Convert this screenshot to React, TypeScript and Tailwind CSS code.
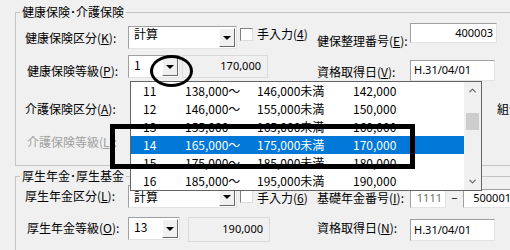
import type { ReactNode } from "react"
import { ChevronDown, ChevronUp } from "lucide-react"

const Txt = ({ className = "", children }: { className?: string; children: ReactNode }) => (
  <span className={`shrink-0 whitespace-nowrap leading-[16px] ${className}`}>{children}</span>
)

const Arrow = () => (
  <div className="w-[16px] h-full shrink-0 flex items-center justify-center bg-[#f0f0f0] border border-t-white border-l-white border-r-[#696969] border-b-[#696969]">
    <div className="w-0 h-0 border-x-[4px] border-x-transparent border-t-[4px] border-t-black" />
  </div>
)

const Combo = ({ className = "", text, textClass = "leading-[16px]" }: { className?: string; text: string; textClass?: string }) => (
  <div className={`shrink-0 h-[23px] flex bg-white border border-t-[#a0a0a0] border-l-[#a0a0a0] border-r-[#e3e3e3] border-b-[#e3e3e3] p-[1px] ${className}`}>
    <span className={`flex-1 pl-[4px] ${textClass}`}>{text}</span>
    <Arrow />
  </div>
)

const Check = ({ className = "" }: { className?: string }) => (
  <div className={`shrink-0 w-[13px] h-[13px] bg-white border border-t-[#808080] border-l-[#808080] border-r-[#dcdcdc] border-b-[#dcdcdc] ${className}`} />
)

const Box = ({ className = "", children }: { className?: string; children?: ReactNode }) => (
  <div className={`shrink-0 flex items-center px-[3px] bg-white border border-t-[#a0a0a0] border-l-[#a0a0a0] border-r-[#e3e3e3] border-b-[#e3e3e3] font-['Noto_Sans',sans-serif] text-[11px] ${className}`}>
    {children}
  </div>
)

const ReadOnly = ({ className = "", children }: { className?: string; children: ReactNode }) => (
  <div className={`shrink-0 flex items-center justify-end pr-[6px] border border-[#dadada] font-['Noto_Sans',sans-serif] text-[11px] ${className}`}>
    {children}
  </div>
)

const rows = [
  ["11", "138,000～", "146,000未満", "142,000"],
  ["12", "146,000～", "155,000未満", "150,000"],
  ["13", "155,000～", "165,000未満", "160,000"],
  ["14", "165,000～", "175,000未満", "170,000"],
  ["15", "175,000～", "185,000未満", "180,000"],
  ["16", "185,000～", "195,000未満", "190,000"],
]

export default function App() {
  return (
    <div className="relative w-[510px] h-[250px] overflow-hidden bg-[#f0f0f0] text-[12px] text-black font-['Noto_Sans_CJK_JP',sans-serif]">
      <div className="pl-[15px] pt-[4px] w-[560px]">
        {/* 健康保険・介護保険 */}
        <fieldset className="h-[162px] border border-[#c4c4c4]">
          <legend className="ml-[4px] px-[2px] leading-[16px]">健康保険･介護保険</legend>

          <div className="flex items-start h-[32px]">
            <Txt className="ml-[9px] w-[103px] mt-[10px]">健康保険区分(<u>K</u>):</Txt>
            <Combo className="w-[109px] mt-[6px]" text="計算" textClass="leading-[12px]" />
            <Check className="ml-[3px] mt-[8px]" />
            <Txt className="ml-[4px] w-[60px] mt-[6px]">手入力(<u>4</u>)</Txt>
            <Txt className="w-[93px] mt-[13px]">健保整理番号(<u>E</u>):</Txt>
            <Box className="w-[87px] h-[20px] mt-[3px] justify-end">400003</Box>
          </div>

          <div className="flex items-start h-[34px]">
            <Txt className="ml-[11px] w-[101px] mt-[11px]">健康保険等級(<u>P</u>):</Txt>
            <Combo className="w-[52px] mt-[3px]" text="1" />
            <ReadOnly className="ml-[2px] w-[86px] h-[23px] mt-[3px]">170,000</ReadOnly>
            <Txt className="ml-[49px] w-[93px] mt-[12px]">資格取得日(<u>V</u>):</Txt>
            <Box className="w-[85px] h-[21px] mt-[8px]">H.31/04/01</Box>
          </div>

          <div className="flex items-start h-[38px]">
            <Txt className="ml-[9px] w-[103px] mt-[15px]">介護保険区分(<u>A</u>):</Txt>
            <Txt className="ml-[369px] mt-[15px]">組合</Txt>
          </div>

          <div className="flex items-start h-[30px]">
            <Txt className="ml-[11px] mt-[10px] text-[#a0a0a0]">介護保険等級(<u>L</u>):</Txt>
          </div>
        </fieldset>

        {/* 厚生年金・厚生基金 */}
        <fieldset className="mt-[2px] h-[90px] border border-[#c4c4c4]">
          <legend className="ml-[4px] px-[2px] leading-[16px]">厚生年金･厚生基金</legend>

          <div className="flex items-start h-[29px]">
            <Txt className="ml-[9px] w-[103px] mt-[4px]">厚生年金区分(<u>L</u>):</Txt>
            <Combo className="w-[109px] mt-[1px]" text="計算" textClass="leading-[19px]" />
            <Check className="ml-[3px] mt-[6px]" />
            <Txt className="ml-[4px] w-[60px] mt-[6px] leading-[12px]">手入力(<u>6</u>)</Txt>
            <Txt className="w-[93px] mt-[6px] leading-[12px]">基礎年金番号(<u>I</u>):</Txt>
            <Box className="w-[36px] h-[19px] mt-[5px] justify-end text-[#6d6d6d]">1111</Box>
            <Txt className="w-[17px] mt-[5px] text-center">–</Txt>
            <Box className="w-[52px] h-[19px] mt-[5px] justify-end">500001</Box>
          </div>

          <div className="flex items-start h-[36px]">
            <Txt className="ml-[11px] w-[101px] mt-[7px]">厚生年金等級(<u>O</u>):</Txt>
            <Combo className="w-[52px] mt-[4px]" text="13" />
            <ReadOnly className="ml-[8px] w-[82px] h-[25px] mt-[4px]">190,000</ReadOnly>
            <Txt className="ml-[47px] w-[93px] mt-[7px]">資格取得日(<u>N</u>):</Txt>
            <Box className="w-[85px] h-[22px] mt-[6px]">H.31/04/01</Box>
          </div>
        </fieldset>
      </div>

      {/* dropdown list */}
      <div className="absolute left-[130px] top-[81px] w-[352px] h-[110px] flex bg-white border border-[#646464]">
        <div className="flex-1 flex flex-col">
          {rows.map((r, i) => (
            <div
              key={r[0]}
              className={`h-[18px] flex items-center leading-[16px] ${i === 3 ? "bg-[#0078d7] text-white" : ""}`}
            >
              <span className="pl-[12px] w-[54px] shrink-0">{r[0]}</span>
              <span className="w-[72px] shrink-0">{r[1]}</span>
              <span className="w-[96px] shrink-0">{r[2]}</span>
              <span className="shrink-0">{r[3]}</span>
            </div>
          ))}
        </div>
        <div className="w-[17px] flex flex-col bg-[#f0f0f0]">
          <div className="h-[17px] flex items-center justify-center text-[#606060]">
            <ChevronUp size={11} strokeWidth={2.5} />
          </div>
          <div className="mt-[14px] mx-[2px] h-[17px] bg-[#cdcdcd]" />
          <div className="flex-1" />
          <div className="h-[17px] flex items-center justify-center text-[#606060]">
            <ChevronDown size={11} strokeWidth={2.5} />
          </div>
        </div>
      </div>

      {/* annotations */}
      <div className="absolute left-[150px] top-[55px] w-[43px] h-[32px] rounded-[50%] border-[3px] border-black" />
      <div className="absolute left-[110px] top-[124px] w-[305px] h-[45px] border-[5px] border-black" />
    </div>
  )
}
